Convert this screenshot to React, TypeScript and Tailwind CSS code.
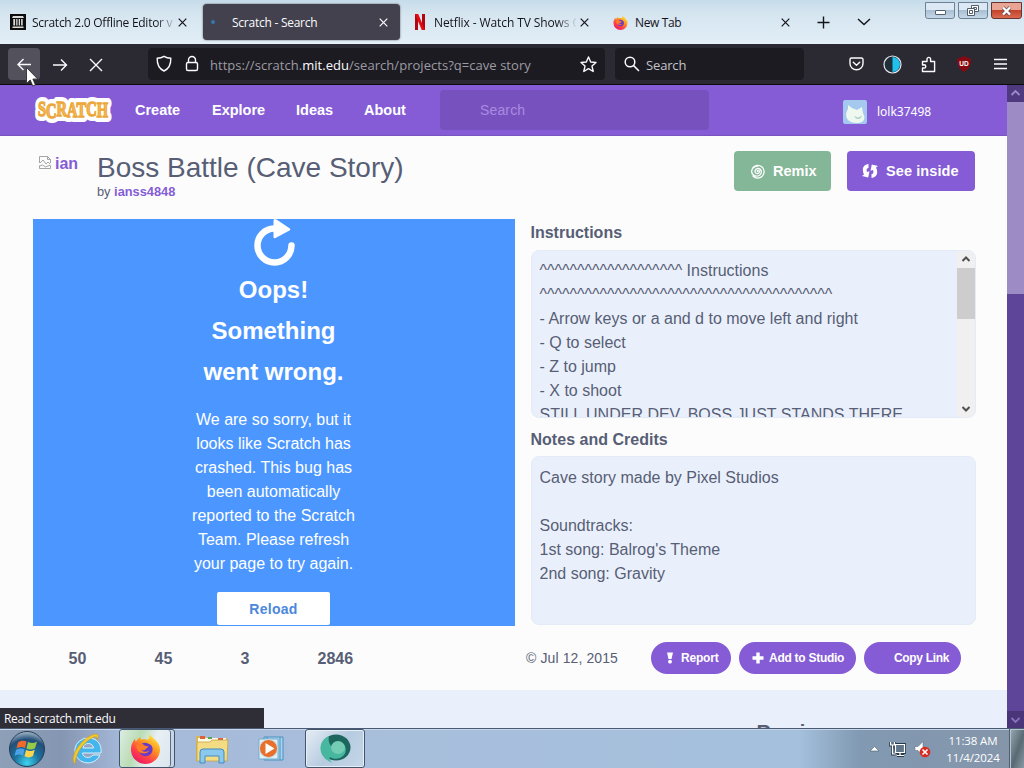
import React from "react";

const UI = "font-['Open_Sans','Noto_Sans',sans-serif]";

function Close({ className = "" }: { className?: string }) {
  return (
    <svg width="9" height="9" viewBox="0 0 9 9" className={"shrink-0 " + className} fill="none" stroke="currentColor" strokeWidth="1.2">
      <path d="M0.7 0.7L8.3 8.3M8.3 0.7L0.7 8.3" />
    </svg>
  );
}

function FirefoxLogo({ size, id }: { size: number; id: string }) {
  return (
    <svg width={size} height={size} viewBox="0 0 32 32" className="shrink-0">
      <defs>
        <linearGradient id={id} x1="0.85" y1="0.05" x2="0.2" y2="1">
          <stop offset="0" stopColor="#fff04a" />
          <stop offset="0.35" stopColor="#ff9a1f" />
          <stop offset="0.7" stopColor="#ff3d4b" />
          <stop offset="1" stopColor="#e3156c" />
        </linearGradient>
      </defs>
      <path d="M20 1c2 3 4 4 6 6 3 3 5 6 5 10a15 15 0 0 1-30 0c0-5 2-8 4-11l1 3c1-2 3-4 5-5v3c2-1 5-1 7 0 2-1 2-4 2-6z" fill={`url(#${id})`} />
      <path d="M10 13c2-3 6-4 9-2 4 1 5 5 4 8-1 3-4 5-7 5-5 0-8-4-6-11z" fill="#6a3bc4" />
      <path d="M7 12c3-2 6-1 8 1l4 1c-1 2-3 2-3 3-1 1-3 1-4 0 1 3 5 3 8 1-2 4-9 4-12 0-1-3-2-4-1-6z" fill="#ff7b25" />
    </svg>
  );
}

function TabBar() {
  return (
    <div className={"flex h-[44px] shrink-0 bg-[linear-gradient(180deg,#c6dcea_0%,#d5e5f0_30%,#dfecf5_85%,#e6f0f8_100%)] text-[12px] text-[#15141a] " + UI}>
      <div className="flex h-full w-[203px] items-center pl-[10px]">
        <svg width="16" height="16" viewBox="0 0 16 16" className="shrink-0">
          <rect width="16" height="16" fill="#0c0c0c" />
          <path d="M3 2h10l1 2H2zM2.500 12.500h11V14h-11zM3.300 5h1.800v6.500H3.300zM6.200 5h1.300v6.500H6.200zM8.700 5H10v6.500H8.700zM11.100 5h1.600v6.500h-1.600z" fill="#d9d9d9" />
        </svg>
        <span className="mt-[2px] ml-[6px] w-[141px] overflow-hidden whitespace-nowrap tracking-[-0.26px] [mask-image:linear-gradient(90deg,#000_124px,transparent_145px)]">Scratch 2.0 Offline Editor very</span>
        <Close className="ml-[5px]" />
      </div>
      <div className="mt-[4px] flex h-[36px] w-[197px] items-center rounded-[4px] bg-[#42414d] pl-[8px] text-[#fbfbfe] shadow-[0_0_2px_#555]">
        <span className="h-[4px] w-[4px] rounded-full bg-[#3577ad]" />
        <span className="mt-[2px] ml-[17px] w-[140px] tracking-[-0.25px]">Scratch - Search</span>
        <Close className="ml-[7px]" />
      </div>
      <div className="flex h-full w-[204px] items-center pl-[15px]">
        <svg width="10" height="16" viewBox="0 0 10 16" className="shrink-0">
          <path d="M0 0h3v16H0zM7 0h3v16H7z" fill="#b1060f" />
          <path d="M0 0h3.2L10 16H6.8z" fill="#e50914" />
        </svg>
        <span className="mt-[2px] ml-[9px] w-[142px] overflow-hidden whitespace-nowrap tracking-[-0.1px] [mask-image:linear-gradient(90deg,#000_122px,transparent_144px)]">Netflix - Watch TV Shows Online</span>
        <Close className="ml-[4px]" />
      </div>
      <div className="flex h-full w-[204px] items-center pl-[9px]">
        <FirefoxLogo size={15} id="foxTab" />
        <span className="mt-[2px] ml-[7px] w-[140px] tracking-[-0.35px]">New Tab</span>
        <Close className="ml-[6px]" />
      </div>
      <svg width="56" height="44" viewBox="0 0 56 44" fill="none" stroke="#15141a" strokeWidth="1.400" className="ml-[8px]">
        <path d="M1.500 22.500h12M7.500 16.500v12M42 19l6 5.500 6-5.500" />
      </svg>
      <div className="ml-auto flex h-[19px] gap-[3px] pr-[2px] pt-[2px]">
        <div className="flex h-[17px] w-[30px] items-center justify-center rounded-b-[3px] border border-[#6e8296] bg-[linear-gradient(#dce8f3_45%,#a9bfd3_50%,#c5d8e8)]">
          <span className="mt-[4px] h-[5px] w-[11px] rounded-[1px] border border-[#525e6c] bg-white" />
        </div>
        <div className="flex h-[17px] w-[30px] items-center justify-center rounded-b-[3px] border border-[#6e8296] bg-[linear-gradient(#dce8f3_45%,#a9bfd3_50%,#c5d8e8)]">
          <svg width="12" height="11" viewBox="0 0 12 11" fill="#fff" stroke="#525e6c">
            <path d="M4.500 0.500h7v6h-7zM6.500 2.500h3v2h-3z" />
            <path d="M0.500 3.500h7v7h-7zM2.500 5.500h3v3h-3z" />
          </svg>
        </div>
        <div className="flex h-[17px] w-[31px] items-center justify-center rounded-b-[3px] border border-[#6b3230] bg-[linear-gradient(#e9a493_45%,#c4432d_50%,#d96a4f)]">
          <svg width="11" height="10" viewBox="0 0 11 10">
            <path d="M2 1.500l7 7M9 1.500l-7 7" stroke="#5a4a52" strokeWidth="3.800" />
            <path d="M2 1.500l7 7M9 1.500l-7 7" stroke="#fff" strokeWidth="2.400" />
          </svg>
        </div>
      </div>
    </div>
  );
}

function Toolbar() {
  return (
    <div className={"flex h-[41px] shrink-0 border-b border-[#0c0c0d] bg-[#2b2a33] text-[13px] " + UI}>
      <div className="mt-[4px] ml-[8px] flex h-[32px] w-[32px] shrink-0 items-center justify-center rounded-[4px] bg-[#52515c]">
        <svg width="16" height="16" viewBox="0 0 16 16" fill="none" stroke="#fbfbfe" strokeWidth="1.400">
          <path d="M15 8.500H2M7.500 3L2 8.500 7.500 14" />
        </svg>
      </div>
      <svg width="52" height="16" viewBox="0 0 52 16" fill="none" stroke="#fbfbfe" strokeWidth="1.400" className="mt-[13px] ml-[12px] shrink-0">
        <path d="M1 8h13.500M9 2.500L14.500 8 9 13.500M38 2l12 12M50 2L38 14" />
      </svg>
      <div className="mt-[4px] ml-[44px] flex h-[32px] w-[457px] shrink-0 items-center rounded-[4px] bg-[#1c1b22] pl-[8px]">
        <svg width="44" height="18" viewBox="0 0 44 18" fill="none" stroke="#fbfbfe" strokeWidth="1.400" className="shrink-0">
          <path d="M8 1.300c2 1.300 4.300 1.900 6.800 2C15 9.500 12.500 14 8 16 3.500 14 1 9.500 1.200 3.300 3.700 3.200 6 2.600 8 1.300z" />
          <rect x="30.500" y="7.500" width="11" height="8" rx="1.500" />
          <path d="M32.500 7.500V5a3.500 3.500 0 0 1 7 0v2.500" />
        </svg>
        <span className="mt-[3px] ml-[10px] w-[370px] whitespace-nowrap tracking-[0.04px] text-[#9d9ca4]">
          https://scratch.<span className="text-[#fbfbfe]">mit.edu</span>/search/projects?q=cave story
        </span>
        <svg width="17" height="17" viewBox="0 0 17 17" fill="none" stroke="#fbfbfe" strokeWidth="1.400" strokeLinejoin="round" className="shrink-0">
          <path d="M8.500 1l2.200 5 5.300.500-4 3.600 1.200 5.400-4.700-2.800-4.700 2.800L5 10.100 1 6.500 6.300 6z" />
        </svg>
      </div>
      <div className="mt-[4px] ml-[10px] flex h-[32px] w-[189px] shrink-0 items-center rounded-[4px] bg-[#1c1b22] pl-[9px] text-[#c3c3c8]">
        <svg width="16" height="16" viewBox="0 0 16 16" fill="none" stroke="#fbfbfe" strokeWidth="1.500">
          <circle cx="6" cy="6" r="4.800" />
          <path d="M9.600 9.600L15 15" />
        </svg>
        <span className="mt-[3px] ml-[6px] tracking-[-0.15px]">Search</span>
      </div>
      <div className="mt-[10px] ml-auto flex h-[20px] w-[180px] shrink-0 items-center pr-0 mr-[6px]">
        <span className="flex w-[36px] justify-center">
          <svg width="15" height="14" viewBox="0 0 15 14" fill="none" stroke="#fbfbfe" strokeWidth="1.400" strokeLinecap="round" strokeLinejoin="round">
            <path d="M2.500 1h10a1.500 1.500 0 0 1 1.500 1.500V6.500a6.500 6.300 0 0 1-13 0V2.500A1.500 1.500 0 0 1 2.500 1zM4.300 5.200l3.200 3 3.200-3" />
          </svg>
        </span>
        <span className="flex w-[36px] justify-center">
          <svg width="19" height="19" viewBox="0 0 19 19">
            <circle cx="9.500" cy="9.500" r="8.500" fill="#20303a" stroke="#e8e8ee" strokeWidth="1.200" />
            <path d="M9.500 2a7.500 7.500 0 0 1 0 15z" fill="#21c0ed" />
          </svg>
        </span>
        <span className="flex w-[36px] justify-center">
          <svg width="15" height="17" viewBox="0 0 15 17" fill="none" stroke="#fbfbfe" strokeWidth="1.400" strokeLinejoin="round">
            <path d="M1.500 9V5.500H6V3.200a1.800 1.800 0 0 1 3.600 0v2.300h4V15.500H1.500V12h1.700a1.600 1.600 0 0 0 0-3.200z" />
          </svg>
        </span>
        <span className="flex w-[36px] justify-center">
          <svg width="16" height="16" viewBox="0 0 16 16">
            <path d="M8 0l7 3c0 6-2 10-7 13C3 13 1 9 1 3z" fill="#850a12" />
            <text x="8" y="10" textAnchor="middle" fontSize="6.500" fontWeight="700" fill="#fff" fontFamily="Liberation Sans, sans-serif">UD</text>
          </svg>
        </span>
        <span className="flex w-[36px] justify-center">
          <svg width="13" height="12" viewBox="0 0 13 12" stroke="#fbfbfe" strokeWidth="1.400">
            <path d="M0 1.500h13M0 6h13M0 10.500h13" />
          </svg>
        </span>
      </div>
    </div>
  );
}

function Nav() {
  return (
    <div className="flex h-[51px] shrink-0 items-center border-b border-[#7854c0] bg-[#855cd6] text-[14.500px] font-bold text-white">
      <svg width="80" height="34" viewBox="0 0 80 34" className="ml-[33px] shrink-0">
        <text x="5" y="23" dy="0 2 -2 1 0 -1 1" textLength="70" lengthAdjust="spacingAndGlyphs" fontFamily="Liberation Serif, serif" fontWeight="700" fontSize="20" fill="#fff" stroke="#fff" strokeWidth="10" strokeLinejoin="round">SCRATCH</text>
        <text x="5" y="23" dy="0 2 -2 1 0 -1 1" textLength="70" lengthAdjust="spacingAndGlyphs" fontFamily="Liberation Serif, serif" fontWeight="700" fontSize="20" fill="#f9b94c" stroke="#eba63c" strokeWidth="1.300" aria-hidden="true">SCRATCH</text>
      </svg>
      <span className="mt-[2px] ml-[22px] w-[77px]">Create</span>
      <span className="mt-[2px] w-[84px]">Explore</span>
      <span className="mt-[2px] w-[68px]">Ideas</span>
      <span className="mt-[2px] w-[76px]">About</span>
      <div className="flex h-[40px] w-[269px] items-center rounded-[4px] bg-[#7752bf] pl-[40px] text-[14px] font-normal tracking-[0.150px] text-[#a98be0]">Search</div>
      <svg width="24" height="24" viewBox="0 0 24 24" className="mt-[3px] ml-[134px] shrink-0">
        <rect width="24" height="24" rx="2" fill="#a5c8ee" />
        <path d="M5 20C2 16 3 12 5 9l0-4 4 3 5 2 5-3 1 6c2 4 2 7-1 9-5 2-11 1-14-2z" fill="#eef8ee" />
        <path d="M11 16c3 2 6 2 8-1-1 5-6 5-8 1z" fill="#a9cec6" />
      </svg>
      <span className="mt-[3px] ml-[10px] font-['Noto_Sans','Open_Sans',sans-serif] text-[12px] font-normal">lolk37498</span>
    </div>
  );
}

function Heading() {
  return (
    <div className="flex h-[83px] shrink-0 pl-[38px] pr-[32px]">
      <div className="flex w-[59px] items-start pt-[19px]">
        <svg width="14" height="15" viewBox="0 0 14 15" fill="none" stroke="#a5a5a5" className="shrink-0">
          <path d="M1.500 8V1.500h8l3 3V8M9.500 1.500v3h3M1.500 10.500v3h11v-3M2 8l3-3 3 4 2-2 2 2M1.500 11l3-1 3 2 5-2" />
        </svg>
        <span className="ml-[3px] text-[16px] leading-[18px] font-bold text-[#855cd6]">ian</span>
      </div>
      <div className="pt-[15px]">
        <div className="text-[28px] leading-[34px] whitespace-nowrap text-[#575e75]">Boss Battle (Cave Story)</div>
        <div className="text-[12.800px] leading-[14px] text-[#575e75]">
          by <span className="font-bold text-[#855cd6]">ianss4848</span>
        </div>
      </div>
      <div className="ml-auto flex gap-[16px] pt-[15px] text-[14.500px] font-bold text-white">
        <div className="flex h-[40px] w-[97px] items-center rounded-[4px] bg-[#84b798] pl-[16px]">
          <svg width="15" height="15" viewBox="0 0 15 15" fill="none" stroke="#fff" strokeWidth="1.300" strokeLinecap="round">
            <path d="M2.500 4A6.400 6.400 0 1 1 3 12M7.500 7.500c-.8-.8.5-1.800 1.400-.9 1.300 1.500-.4 3.600-2.300 2.900C3.900 8.500 4.900 4.300 8.100 4.400c3.600.2 4.400 5.200 1.200 7.100C5 13.500.5 10 2 5.800 3 3.500 5 2.300 7.500 2.200" />
          </svg>
          <span className="mt-[2px] ml-[8px]">Remix</span>
        </div>
        <div className="flex h-[40px] w-[128px] items-center rounded-[4px] bg-[#855cd6] pl-[15px]">
          <svg width="16" height="14" viewBox="0 0 16 14" fill="#fff">
            <path d="M6.500 0v4C4.800 4 4.200 5.500 5 8l2.500-.7L6.200 13.500 0 12l2-1.500C-.5 5.500 1 .5 6.500 0zM9.500 14v-4c1.700 0 2.300-1.500 1.500-4L8.500 6.700 9.800.500 16 2l-2 1.500c2.500 5 1 10-4.500 10.500z" />
          </svg>
          <span className="mt-[2px] ml-[8px] tracking-[0.1px]">See inside</span>
        </div>
      </div>
    </div>
  );
}

function Stage() {
  return (
    <div className="flex h-[407px] w-[482px] shrink-0 flex-col items-center bg-[#4c97ff] pr-px text-center text-white">
      <svg width="44" height="48" viewBox="0 0 44 48" className="shrink-0">
        <path d="M22 9.500A17 17 0 1 0 39.500 26.500" fill="none" stroke="#fff" strokeWidth="6.500" strokeLinecap="round" />
        <path d="M21.500 2v16q0 2 2 1l14-7.500q1.500-1 0-2.200L24.500 0.500q-3-1.500-3 1.500z" fill="#fff" />
      </svg>
      <div className="mt-[2px] w-[160px] text-[24px] leading-[41px] font-bold">Oops!<br />Something<br />went wrong.</div>
      <div className="mt-[16px] text-[16px] leading-[24px] whitespace-nowrap">
        We are so sorry, but it<br />looks like Scratch has<br />crashed. This bug has<br />been automatically<br />reported to the Scratch<br />Team. Please refresh<br />your page to try again.
      </div>
      <div className="mt-[16px] flex h-[33px] w-[113px] items-center justify-center rounded-[2px] bg-white pt-[2px] text-[14px] font-bold tracking-[0.300px] text-[#4c87dc]">Reload</div>
    </div>
  );
}

function Notes() {
  return (
    <div className="ml-[15.5px] flex w-[445px] flex-col text-[16px] text-[#575e75]">
      <div className="pt-[2px] text-[16px] leading-[24px] font-bold">Instructions</div>
      <div className="mt-[5px] flex h-[168px] w-[445px] overflow-hidden rounded-[8px] border border-[#e3ebf7] bg-[#eaf0fb]">
        <div className="flex-1 pt-[8px] pl-[8px] leading-[24px] whitespace-nowrap">
          ^^^^^^^^^^^^^^^^^^^ Instructions<br />
          ^^^^^^^^^^^^^^^^^^^^^^^^^^^^^^^^^^^^^^^<br />
          - Arrow keys or a and d to move left and right<br />
          - Q to select<br />- Z to jump<br />- X to shoot<br />
          STILL UNDER DEV. BOSS JUST STANDS THERE
        </div>
        <div className="flex w-[18px] flex-col items-center bg-[#f0f0f0]">
          <svg width="18" height="17" viewBox="0 0 18 17" fill="none" stroke="#505050" strokeWidth="2" className="shrink-0">
            <path d="M5.500 10l3.500-3.500 3.500 3.500" />
          </svg>
          <div className="h-[51px] w-full shrink-0 bg-[#cdcdcd]" />
          <svg width="18" height="17" viewBox="0 0 18 17" fill="none" stroke="#505050" strokeWidth="2" className="mt-auto shrink-0">
            <path d="M5.500 7L9 10.500 12.500 7" />
          </svg>
        </div>
      </div>
      <div className="mt-[10px] text-[16px] leading-[24px] font-bold tracking-[0.02px]">Notes and Credits</div>
      <div className="mt-[4px] h-[169px] w-[445px] rounded-[8px] border border-[#e3ebf7] bg-[#eaf0fb] pt-[9px] pl-[8px] leading-[24px]">
        Cave story made by Pixel Studios<br /><br />Soundtracks:<br />1st song: Balrog's Theme<br />2nd song: Gravity
      </div>
    </div>
  );
}

function Stats() {
  return (
    <div className="flex h-[64px] shrink-0 items-center pl-[68.5px] text-[16px] font-bold text-[#575e75]">
      <span className="mt-[2px] w-[86px]">50</span>
      <span className="mt-[2px] w-[86px]">45</span>
      <span className="mt-[2px] w-[77px]">3</span>
      <span className="mt-[2px] w-[208.5px]">2846</span>
      <span className="flex w-[125px] items-center text-[14px] font-normal whitespace-nowrap">
        <span className="w-[14.500px] text-[14px]">©</span>
        <span className="tracking-[0.100px]">Jul 12, 2015</span>
      </span>
      <div className="flex gap-[8px] text-[12px] whitespace-nowrap text-white">
        <div className="flex h-[32px] w-[80px] items-center rounded-full bg-[#855cd6] pl-[15px]">
          <svg width="8" height="12" viewBox="0 0 8 12" fill="#fff"><path d="M1 0.500h6L5.500 7h-3z" /><circle cx="4" cy="9.700" r="1.900" /></svg>
          <span className="ml-[7px] tracking-[-0.200px]">Report</span>
        </div>
        <div className="flex h-[32px] w-[117px] items-center rounded-full bg-[#855cd6] pl-[13px]">
          <svg width="12" height="12" viewBox="0 0 12 12" stroke="#fff" strokeWidth="3.400"><path d="M6 0.500v11M0.500 6h11" /></svg>
          <span className="ml-[5px] tracking-[-0.270px]">Add to Studio</span>
        </div>
        <div className="flex h-[32px] w-[97px] items-center rounded-full bg-[#855cd6] pl-[30px] tracking-[-0.330px]">Copy Link</div>
      </div>
    </div>
  );
}

function PageScrollbar() {
  return (
    <div className="flex w-[17px] shrink-0 flex-col bg-[#5f4599]">
      <svg width="17" height="17" viewBox="0 0 17 17" fill="none" stroke="#9f8bc9" strokeWidth="1.800" className="shrink-0 bg-[#4f3a80]">
        <path d="M4.500 10l4-4 4 4" />
      </svg>
      <div className="h-[192px] w-full bg-[#9c8bc4]" />
      <svg width="17" height="17" viewBox="0 0 17 17" fill="none" stroke="#8a72bd" strokeWidth="1.800" className="mt-auto shrink-0 bg-[#4b3579]">
        <path d="M4.500 7l4 4 4-4" />
      </svg>
    </div>
  );
}

function Taskbar() {
  return (
    <div className="flex h-[40px] shrink-0 items-center border-t border-[#4a5a74] bg-[linear-gradient(90deg,#8e9fb8_0%,#8596b2_6%,#a5b9d9_12%,#a8bfdc_40%,#a4c0dc_78%,#8199b2_84%,#8595a9_100%)] shadow-[inset_0_1px_0_#c9d8e8]">
      <svg width="38" height="38" viewBox="0 0 38 38" className="ml-[8px] shrink-0">
        <defs>
          <radialGradient id="orb" cx="0.5" cy="0.9" r="0.9">
            <stop offset="0" stopColor="#3ed4ef" />
            <stop offset="0.4" stopColor="#1b719f" />
            <stop offset="0.75" stopColor="#234f78" />
            <stop offset="1" stopColor="#a8bccb" />
          </radialGradient>
        </defs>
        <circle cx="19" cy="19" r="17.500" fill="url(#orb)" stroke="#273d52" />
        <path d="M10 12.500c2.500-2 5.500-2.500 8.500-1L17 18c-3-1.500-6-1-8.500.5z" fill="#f2682d" />
        <path d="M20 12c3 1.500 5.500 1.500 9-.5L27 18.200c-3 1.800-5.500 1.800-8.500.3z" fill="#98ca45" />
        <path d="M8 20c2.500-1.500 5.500-2 8.500-.5L15 25.500c-3-1.500-6-1-8.500.5z" fill="#4aa3e6" />
        <path d="M18 20c3 1.500 5.500 1.500 8.700-.3L25 26c-3 1.800-5.500 1.800-8.500.3z" fill="#fbd34c" />
      </svg>
      <svg width="32" height="34" viewBox="0 0 32 34" className="ml-[25px] shrink-0">
        <path d="M17 6a13 12.500 0 1 0 12 17h-7c-3 4-10 3-10.500-2H30C31 12 26 6 17 6zM12 16c.5-6 10-6 10.500 0z" fill="#44b5ed" stroke="#d5f1ff" strokeWidth="1" fillRule="evenodd" />
        <path d="M4 32C-2 27 8 9 20 3.500c7-3.300 9 0 6 4.500 1.500-4-2-4-6-1.500C11 12 4 23 4 32z" fill="#f4c929" stroke="#ca9d18" strokeWidth="0.600" />
      </svg>
      <div className="ml-[16px] flex h-[39px] w-[56px] rounded-[3px] border border-[#43556d] bg-[#c8d5e5]">
        <div className="flex h-full w-[51px] items-center justify-center rounded-[3px] border-r border-[#5a6d85] bg-[linear-gradient(110deg,#dcece2_0%,#b9dcb4_35%,#e8f0f4_62%,#dce5ef_100%)]">
          <FirefoxLogo size={31} id="foxTask" />
        </div>
      </div>
      <svg width="34" height="32" viewBox="0 0 34 32" className="ml-[20px] shrink-0">
        <path d="M1 3h9l2 2h20v23H1z" fill="#d9b65a" />
        <path d="M3 5h28v6H3z" fill="#fffbe0" />
        <path d="M5 3h5v3H5zM23 5h5v2h-5z" fill="#d76045" />
        <path d="M13 4h4v2h-4z" fill="#56a653" />
        <path d="M2 9h13l2-2h16l-1 21H2z" fill="#f3dc83" stroke="#c29c3f" strokeWidth="0.700" />
        <path d="M5 19q0-3 3-3h18q3 0 3 3v11h-5v-7H10v7H5z" fill="#8ac9ed" stroke="#438cc0" />
      </svg>
      <svg width="28" height="28" viewBox="0 0 28 28" className="ml-[28px] shrink-0">
        <path d="M7 2h19v23H7zM10 2v23M23 2v23" fill="#a7d4ee" stroke="#4a91c0" />
        <path d="M2 4h19v20H2z" fill="#e0f0f8" stroke="#77abc9" />
        <circle cx="11.500" cy="13.500" r="9" fill="#e9702a" stroke="#c5dbe7" />
        <path d="M8.500 8l9 5.500-9 5.500z" fill="#fff" />
      </svg>
      <div className="ml-[20px] flex h-[39px] w-[60px] items-center justify-center rounded-[3px] border border-[#43556d] bg-[linear-gradient(130deg,#e5edf5,#b6cbe0_50%,#c5d7e8)] shadow-[inset_0_0_0_1px_#e6eff7]">
        <svg width="34" height="32" viewBox="0 0 34 32">
          <ellipse cx="18" cy="14.500" rx="14.500" ry="13" fill="#1c665f" />
          <path d="M11 3C-1 8-1 25 15 30c-3-2-4-4-3-6 4 3 11 2 14-2 3-4 2-9-1-11-5-3-9-1-11 3-3-3-4-7-3-11z" fill="#48b7a0" />
          <ellipse cx="20" cy="14.500" rx="7" ry="6.500" fill="#74ccb4" />
        </svg>
      </div>
      <div className={"ml-auto flex h-full items-center text-[11.500px] leading-[17px] text-white " + UI}>
        <svg width="62" height="20" viewBox="0 0 62 20" className="mr-[13px]">
          <path d="M0 12h9L4.500 7.500z" fill="#fff" stroke="#4e5e70" strokeWidth="0.600" />
          <path d="M25.500 5.500h9v8h-9zM27 16.500h7M30 13.500v3M20.500 3v3h4V3M22.500 6v9h3" fill="#60758a" stroke="#29394a" strokeWidth="2.800" />
          <path d="M25.500 5.500h9v8h-9zM27 16.500h7M30 13.500v3M20.500 3v3h4V3M22.500 6v9h3" fill="#60758a" stroke="#fff" strokeWidth="1.200" />
          <path d="M45 7.500h3l5-5v14l-5-5h-3z" fill="#fff" stroke="#596776" strokeWidth="0.500" />
          <circle cx="55" cy="13" r="5.300" fill="#d62c24" />
          <path d="M52.500 10.500l5 5M57.500 10.500l-5 5" stroke="#fff" strokeWidth="1.600" />
        </svg>
        <div className="w-[56px] text-center tracking-[-0.120px] whitespace-nowrap">11:38 AM<br />11/4/2024</div>
        <div className="ml-[8px] h-[39px] w-[15px] border-l border-[#4f6070] bg-[linear-gradient(110deg,#9babb4,#5a6a74_55%,#899aa5)] shadow-[inset_1px_1px_0_#b7c4ce]" />
      </div>
    </div>
  );
}

export default function App() {
  return (
    <div className="relative flex h-[768px] w-[1024px] flex-col overflow-hidden bg-white">
      <TabBar />
      <Toolbar />
      <div className="flex h-[643px] shrink-0 overflow-hidden">
        <div className="flex w-[1007px] flex-col bg-[#fcfcfc] font-['Liberation_Sans',Arial,sans-serif]">
          <Nav />
          <Heading />
          <div className="flex h-[407px] shrink-0 pl-[33px]">
            <Stage />
            <Notes />
          </div>
          <Stats />
          <div className="h-[38px] overflow-hidden bg-[#eaf0fb] pt-[30px] pl-[756.5px] text-[20px] leading-[24px] font-bold text-[#575e75]">Remixes</div>
        </div>
        <PageScrollbar />
      </div>
      <Taskbar />
      <div className={"absolute top-[708px] left-0 flex h-[20px] w-[264px] items-center bg-[#2f2e36] pt-[2px] pl-[4px] text-[12px] tracking-[-0.320px] text-[#fbfbfe] " + UI}>Read scratch.mit.edu</div>
      <svg width="12" height="20" viewBox="0 0 12 20" className="absolute top-[67px] left-[26px]">
        <path d="M0.500 0.500v16l3.700-3.500 2.600 6 2.600-1.100-2.500-5.900h4.800z" fill="#fff" stroke="#222" strokeWidth="0.800" />
      </svg>
    </div>
  );
}
